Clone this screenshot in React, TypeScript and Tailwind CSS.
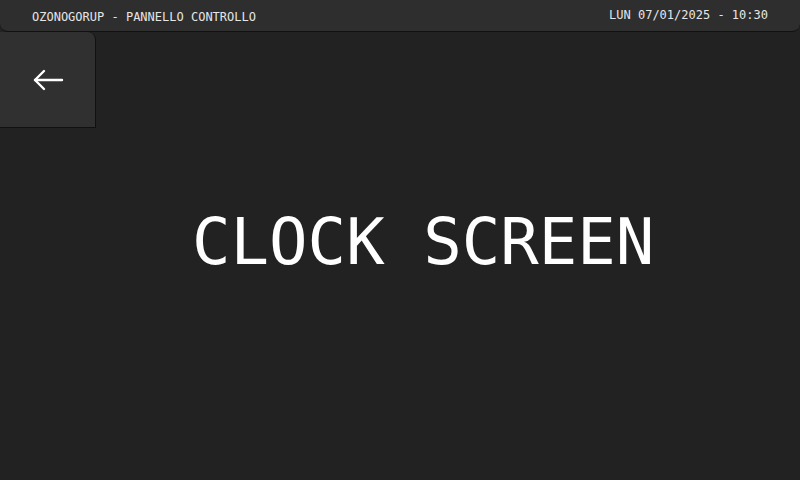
import React from "react";

const mono = { fontFamily: '"DejaVu Sans Mono", "Liberation Mono", monospace' };

const App: React.FC = () => {
  return (
    <div className="w-[800px] h-[480px] bg-[#222222] text-white flex flex-col overflow-hidden" style={mono}>
      {/* Top bar */}
      <div className="h-[32px] bg-[#2e2e2e] border-b border-[#111111] rounded-b-[8px] flex items-center justify-between pl-[32px] pr-[32px] text-[12px] text-[#e6e6e6] shrink-0">
        <span className="mt-[3px]">OZONOGORUP - PANNELLO CONTROLLO</span>
        <span className="-mt-[1px]">LUN 07/01/2025 - 10:30</span>
      </div>

      <div className="flex flex-1">
        <div className="flex flex-col">
          <button className="w-[96px] h-[96px] bg-[#303030] border-r border-b border-[#111111] rounded-tr-[8px] flex items-center justify-center">
            <svg width="32" height="32" viewBox="0 0 32 32" fill="none" stroke="#ffffff" strokeWidth="2.4" strokeLinecap="round" strokeLinejoin="round">
              <path d="M30 16H3" />
              <path d="M12 7L3 16l9 9" />
            </svg>
          </button>
        </div>
        <div className="flex-1 flex items-start justify-start pt-[178px] pl-[96px]">
          <h1 className="text-[64px] leading-[1] font-normal">CLOCK SCREEN</h1>
        </div>
      </div>
    </div>
  );
};

export default App;
